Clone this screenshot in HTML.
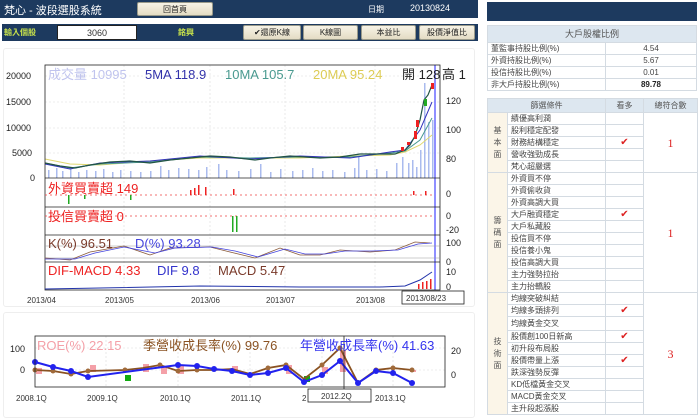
<!DOCTYPE html>
<html><head><meta charset="utf-8"><style>
*{margin:0;padding:0;box-sizing:border-box}
body{width:700px;height:420px;background:#fff;position:relative;overflow:hidden;font-family:"Liberation Sans","Noto Sans CJK TC",sans-serif;font-size:9px;color:#333}
.abs{position:absolute}
.nav{background:#1d3a5f}
.btn{position:absolute;background:linear-gradient(#f7f3e6,#e4dcc4);border:1px solid #9a9a8a;border-radius:2px;font-size:8px;color:#222;text-align:center;line-height:13px;height:15px}
table{border-collapse:collapse;font-size:8px;table-layout:fixed}
td{border:1px solid #d4dbe2;padding:0 3px;height:12px;line-height:10px;color:#444;white-space:nowrap;overflow:hidden}
.hd{background:#dde7f0;text-align:center;color:#555}
.cat{background:#fbf5e8;text-align:center;color:#555;line-height:12px;white-space:normal}
.ck{color:#d22;text-align:center;font-size:10px}
.num{color:#d22;text-align:center;font-size:12px;font-family:"Liberation Serif",serif}
</style></head><body>
<div class="abs nav" style="left:0;top:0;width:478px;height:18px"></div>
<div class="abs" style="left:4px;top:2px;color:#fff;font-size:11px">梵心 - 波段選股系統</div>
<div class="btn" style="left:137px;top:2px;width:76px;height:14px">回首頁</div>
<div class="abs" style="left:368px;top:4px;color:#fff;font-size:8px">日期</div>
<div class="abs" style="left:410px;top:3px;color:#fff;font-size:9px">20130824</div>
<div class="abs nav" style="left:487px;top:2px;width:210px;height:19px"></div>

<div class="abs nav" style="left:2px;top:24px;width:476px;height:17px"></div>
<div class="abs" style="left:4px;top:27px;color:#c6e04c;font-size:8px;font-weight:bold">輸入個股</div>
<div class="abs" style="left:57px;top:25px;width:80px;height:15px;background:#fff;border:1px solid #222;text-align:center;font-size:9px;line-height:15px">3060</div>
<div class="abs" style="left:178px;top:27px;color:#c6e04c;font-size:8px;font-weight:bold">銘興</div>
<div class="btn" style="left:243px;top:25px;width:58px">✔還原K線</div>
<div class="btn" style="left:303px;top:25px;width:55px">K線圖</div>
<div class="btn" style="left:361px;top:25px;width:55px">本益比</div>
<div class="btn" style="left:419px;top:25px;width:56px">股價淨值比</div>

<div class="abs" style="left:3px;top:48px;width:472px;height:259px;border:1px solid #eee;border-radius:3px"></div>
<div class="abs" style="left:3px;top:312px;width:472px;height:106px;border:1px solid #eee;border-radius:3px"></div>

<svg class="abs" style="left:0;top:0" width="480" height="420" font-family="Liberation Sans,Noto Sans CJK TC,sans-serif">
<g stroke="#ddd" stroke-dasharray="2,2" stroke-width="0.6">
<line x1="124" y1="65" x2="124" y2="290"/><line x1="210" y1="65" x2="210" y2="290"/><line x1="285" y1="65" x2="285" y2="290"/><line x1="375" y1="65" x2="375" y2="290"/>
<line x1="45" y1="76" x2="440" y2="76"/><line x1="45" y1="102" x2="440" y2="102"/><line x1="45" y1="128" x2="440" y2="128"/><line x1="45" y1="153" x2="440" y2="153"/>
</g>
<g fill="#aabbee">
<rect x="48" y="170" width="1.5" height="8"/><rect x="56" y="168" width="1.5" height="10"/><rect x="62" y="171" width="1.5" height="7"/><rect x="70" y="169" width="1.5" height="9"/><rect x="78" y="172" width="1.5" height="6"/><rect x="86" y="170" width="1.5" height="8"/><rect x="95" y="171" width="1.5" height="7"/><rect x="103" y="169" width="1.5" height="9"/><rect x="112" y="172" width="1.5" height="6"/><rect x="120" y="170" width="1.5" height="8"/><rect x="130" y="171" width="1.5" height="7"/><rect x="140" y="172" width="1.5" height="6"/><rect x="150" y="171" width="1.5" height="7"/><rect x="160" y="166" width="1.5" height="12"/><rect x="168" y="170" width="1.5" height="8"/><rect x="178" y="168" width="1.5" height="10"/><rect x="188" y="169" width="1.5" height="9"/><rect x="198" y="170" width="1.5" height="8"/><rect x="206" y="167" width="1.5" height="11"/><rect x="218" y="164" width="1.5" height="14"/><rect x="226" y="170" width="1.5" height="8"/><rect x="238" y="171" width="1.5" height="7"/><rect x="250" y="169" width="1.5" height="9"/><rect x="260" y="164" width="1.5" height="14"/><rect x="270" y="172" width="1.5" height="6"/><rect x="280" y="169" width="1.5" height="9"/><rect x="292" y="171" width="1.5" height="7"/><rect x="302" y="170" width="1.5" height="8"/><rect x="312" y="168" width="1.5" height="10"/><rect x="322" y="171" width="1.5" height="7"/><rect x="332" y="170" width="1.5" height="8"/><rect x="344" y="172" width="1.5" height="6"/><rect x="354" y="168" width="1.5" height="10"/><rect x="358" y="156" width="1.5" height="22"/><rect x="366" y="170" width="1.5" height="8"/><rect x="376" y="169" width="1.5" height="9"/><rect x="386" y="171" width="1.5" height="7"/><rect x="396" y="163" width="1.5" height="15"/><rect x="402" y="157" width="1.5" height="21"/><rect x="408" y="163" width="1.5" height="15"/><rect x="412" y="160" width="1.5" height="18"/><rect x="416" y="167" width="1.5" height="11"/><rect x="420" y="150" width="1.5" height="28"/><rect x="424" y="83" width="1.5" height="95"/><rect x="428" y="122" width="1.5" height="56"/><rect x="432" y="120" width="1.5" height="58"/>
</g>
<polyline fill="none" stroke="#e0d870" stroke-width="1" points="45,159 70,164 100,165 150,161 200,158 250,158 300,158 350,156 390,155 405,152 420,145 432,135"/>
<polyline fill="none" stroke="#4a9a90" stroke-width="1" points="45,163 70,168 100,164 150,162 200,157 250,158 300,157 350,157 390,153 405,151 420,140 432,118"/>
<polyline fill="none" stroke="#3333bb" stroke-width="1" points="45,164 70,169 100,163 150,161 200,156 250,159 300,156 350,158 390,152 405,150 420,130 432,102"/>
<polyline fill="none" stroke="#225544" stroke-width="1.2" points="45,163 60,166 75,168 90,165 110,162 130,161 150,163 170,160 190,158 210,156 230,157 255,160 270,158 290,156 320,158 340,157 360,154 380,154 395,154 405,150 410,145 415,136 420,120 424,100 428,95 432,85"/>
<g fill="#e22"><rect x="414" y="131" width="3" height="8"/><rect x="416" y="120" width="3" height="7"/><rect x="431" y="83" width="3" height="6"/><rect x="401" y="147" width="3" height="4"/><rect x="407" y="142" width="3" height="3"/></g>
<rect x="424" y="99" width="3" height="7" fill="#2a2"/>
<line x1="435" y1="65" x2="435" y2="290" stroke="#6a6aff" stroke-width="1.5"/>
<g fill="none" stroke="#222" stroke-width="0.8">
<rect x="45" y="65" width="395" height="225"/>
<line x1="45" y1="178" x2="440" y2="178"/><line x1="45" y1="207" x2="440" y2="207"/><line x1="45" y1="235" x2="440" y2="235"/><line x1="45" y1="262" x2="440" y2="262"/>
</g>
<g font-size="13">
<text x="48" y="79" fill="#c0c4ee">成交量 10995</text>
<text x="145" y="79" fill="#3333aa">5MA 118.9</text>
<text x="225" y="79" fill="#4a9a90">10MA 105.7</text>
<text x="313" y="79" fill="#ddcc55">20MA 95.24</text>
<text x="402" y="79" fill="#222">開 128</text>
<text x="442" y="79" fill="#222">高 1</text>
</g>
<g font-size="9" fill="#222">
<text x="6" y="79">20000</text><text x="6" y="105">15000</text><text x="6" y="131">10000</text><text x="12" y="156">5000</text><text x="30" y="181">0</text>
<text x="446" y="104">120</text><text x="446" y="133">100</text><text x="446" y="162">80</text>
<text x="446" y="197">0</text><text x="446" y="219">0</text><text x="446" y="233">-20</text>
<text x="446" y="246">100</text><text x="446" y="265">0</text><text x="446" y="275">10</text><text x="446" y="290">0</text>
</g>
<line x1="45" y1="195" x2="435" y2="195" stroke="#e44" stroke-dasharray="2,3" stroke-width="0.8"/>
<g fill="#e22"><rect x="190" y="190" width="1.5" height="5"/><rect x="194" y="188" width="1.5" height="7"/><rect x="198" y="185" width="1.5" height="10"/><rect x="205" y="187" width="1.5" height="8"/><rect x="233" y="189" width="1.5" height="6"/><rect x="413" y="191" width="1.5" height="4"/><rect x="425" y="191" width="1.5" height="4"/></g>
<g fill="#2a2"><rect x="68" y="195" width="1.5" height="9"/><rect x="130" y="195" width="1.5" height="5"/><rect x="84" y="195" width="1.5" height="4"/></g>
<text x="48" y="193" font-size="13" fill="#e22">外資買賣超 149</text>
<line x1="45" y1="216" x2="435" y2="216" stroke="#e44" stroke-dasharray="2,3" stroke-width="0.8"/>
<rect x="232" y="216" width="1.5" height="16" fill="#2a2"/><rect x="236" y="216" width="1.5" height="16" fill="#2a2"/>
<text x="48" y="221" font-size="13" fill="#e22">投信買賣超 0</text>
<line x1="45" y1="246" x2="440" y2="246" stroke="#999" stroke-width="0.6"/><line x1="45" y1="258" x2="440" y2="258" stroke="#999" stroke-width="0.6"/>
<polyline fill="none" stroke="#8a5a3a" stroke-width="0.8" points="45,258 70,260 90,252 124,246 150,255 170,248 210,247 230,252 255,258 280,248 300,255 320,255 340,250 370,252 395,250 415,242 430,243"/>
<polyline fill="none" stroke="#4444dd" stroke-width="0.8" points="45,259 75,259 95,253 124,247 155,253 175,248 212,247 235,251 258,257 285,249 305,254 325,254 345,251 372,251 398,250 418,244 432,243"/>
<text x="48" y="248" font-size="13" fill="#7a3a2a">K(%) 96.51</text><text x="135" y="248" font-size="13" fill="#4444dd">D(%) 93.28</text>
<polyline fill="none" stroke="#2233aa" stroke-width="1" points="45,289 100,288 200,286 300,287 380,287 405,286 420,280 432,272"/>
<g fill="#e22"><rect x="418" y="284" width="1.5" height="5"/><rect x="422" y="282" width="1.5" height="7"/><rect x="426" y="281" width="1.5" height="8"/><rect x="430" y="279" width="1.5" height="10"/></g>
<text x="48" y="275" font-size="13" fill="#e22">DIF-MACD 4.33</text><text x="157" y="275" font-size="13" fill="#3333cc">DIF 9.8</text><text x="218" y="275" font-size="13" fill="#7a3a2a">MACD 5.47</text>
<g font-size="8" fill="#333"><text x="27" y="303">2013/04</text><text x="105" y="303">2013/05</text><text x="191" y="303">2013/06</text><text x="266" y="303">2013/07</text><text x="356" y="303">2013/08</text></g>
<rect x="402" y="291" width="62" height="13" fill="#fff" stroke="#222" stroke-width="0.8"/><text x="406" y="301" font-size="8" fill="#333">2013/08/23</text>

<g stroke="#ddd" stroke-dasharray="2,2" stroke-width="0.6"><line x1="106" y1="336" x2="106" y2="387"/><line x1="178" y1="336" x2="178" y2="387"/><line x1="250" y1="336" x2="250" y2="387"/><line x1="322" y1="336" x2="322" y2="387"/><line x1="393" y1="336" x2="393" y2="387"/><line x1="35" y1="370" x2="445" y2="370"/><line x1="35" y1="348" x2="445" y2="348"/></g>
<g fill="#f4a0a8"><rect x="36" y="368" width="6" height="6"/><rect x="90" y="365" width="6" height="7"/><rect x="143" y="364" width="6" height="8"/><rect x="161" y="367" width="6" height="7"/><rect x="178" y="366" width="6" height="8"/><rect x="232" y="366" width="6" height="7"/><rect x="286" y="365" width="6" height="9"/><rect x="322" y="367" width="6" height="7"/><rect x="340" y="350" width="6" height="22"/><rect x="410" y="370" width="6" height="2"/></g>
<g fill="#1a1"><rect x="125" y="375" width="6" height="6"/><rect x="304" y="376" width="6" height="6"/></g>
<polyline fill="none" stroke="#8a5222" stroke-width="1.8" points="35,370 53,371 71,374 88,371 125,370 143,368 160,365 178,371 197,370 214,370 232,369 250,374 268,368 286,365 304,379 322,365 340,348 358,383 376,370 393,368 412,370"/>
<g fill="#a06a3a"><circle cx="35" cy="370" r="2.5"/><circle cx="53" cy="371" r="2.5"/><circle cx="71" cy="374" r="2.5"/><circle cx="88" cy="371" r="2.5"/><circle cx="125" cy="370" r="2.5"/><circle cx="160" cy="365" r="2.5"/><circle cx="178" cy="371" r="2.5"/><circle cx="197" cy="370" r="2.5"/><circle cx="268" cy="368" r="2.5"/><circle cx="286" cy="365" r="2.5"/><circle cx="322" cy="365" r="2.5"/><circle cx="340" cy="348" r="2.5"/><circle cx="376" cy="370" r="2.5"/><circle cx="393" cy="368" r="2.5"/><circle cx="412" cy="370" r="2.5"/></g>
<polyline fill="none" stroke="#2222ee" stroke-width="2" points="35,362 53,367 71,371 88,377 178,365 197,366 214,369 232,371 250,375 268,373 286,368 304,382 322,375 340,361 358,383 376,371 393,373 412,383"/>
<g fill="#2222ee"><circle cx="35" cy="362" r="3"/><circle cx="53" cy="367" r="3"/><circle cx="71" cy="371" r="3"/><circle cx="88" cy="377" r="3"/><circle cx="178" cy="365" r="3"/><circle cx="197" cy="366" r="3"/><circle cx="214" cy="369" r="3"/><circle cx="232" cy="371" r="3"/><circle cx="250" cy="375" r="3"/><circle cx="268" cy="373" r="3"/><circle cx="286" cy="368" r="3"/><circle cx="304" cy="382" r="3"/><circle cx="322" cy="375" r="3"/><circle cx="340" cy="361" r="3"/><circle cx="358" cy="383" r="3"/><circle cx="376" cy="371" r="3"/><circle cx="393" cy="373" r="3"/><circle cx="412" cy="383" r="3"/></g>
<line x1="344" y1="336" x2="344" y2="392" stroke="#222" stroke-width="0.8"/>
<rect x="35" y="336" width="410" height="51" fill="none" stroke="#222" stroke-width="0.8"/>
<text x="37" y="350" font-size="13" fill="#f4a0a8">ROE(%) 22.15</text>
<text x="143" y="350" font-size="13" fill="#8a5222">季營收成長率(%) 99.76</text>
<text x="300" y="350" font-size="13" fill="#3333ee">年營收成長率(%) 41.63</text>
<g font-size="9" fill="#222"><text x="10" y="352">100</text><text x="20" y="373">0</text><text x="451" y="354">20</text><text x="451" y="378">0</text></g>
<g font-size="8" fill="#333"><text x="16" y="401">2008.1Q</text><text x="87" y="401">2009.1Q</text><text x="160" y="401">2010.1Q</text><text x="231" y="401">2011.1Q</text><text x="302" y="401">2</text><text x="375" y="401">2013.1Q</text></g>
<rect x="308" y="389" width="63" height="13" fill="#fff" stroke="#222" stroke-width="0.8"/><text x="321" y="399" font-size="8" fill="#333">2012.2Q</text>
</svg>

<table class="abs" style="left:487px;top:25px;width:210px">
<colgroup><col style="width:118px"><col></colgroup>
<tr><td colspan="2" class="hd" style="height:17px;font-size:9px">大戶股權比例</td></tr>
<tr><td>董監事持股比例(%)</td><td style="text-align:center">4.54</td></tr>
<tr><td>外資持股比例(%)</td><td style="text-align:center">5.67</td></tr>
<tr><td>投信持股比例(%)</td><td style="text-align:center">0.01</td></tr>
<tr><td>非大戶持股比例(%)</td><td style="text-align:center;color:#222;font-weight:bold">89.78</td></tr>
</table>

<table class="abs" style="left:487px;top:98px;width:210px">
<colgroup><col style="width:20px"><col style="width:98px"><col style="width:38px"><col style="width:54px"></colgroup>
<tr><td colspan="2" class="hd" style="height:14px">篩選條件</td><td class="hd">看多</td><td class="hd">總符合數</td></tr>
<tr><td rowspan="5" class="cat">基<br>本<br>面</td><td>績優高利潤</td><td></td><td rowspan="5" class="num">1</td></tr>
<tr><td>股利穩定配發</td><td></td></tr>
<tr><td>財務結構穩定</td><td class="ck">✔</td></tr>
<tr><td>營收強勁成長</td><td></td></tr>
<tr><td>梵心超嚴選</td><td></td></tr>
<tr><td rowspan="10" class="cat">籌<br>碼<br>面</td><td>外資買不停</td><td></td><td rowspan="10" class="num">1</td></tr>
<tr><td>外資偷收貨</td><td></td></tr>
<tr><td>外資高調大買</td><td></td></tr>
<tr><td>大戶融資穩定</td><td class="ck">✔</td></tr>
<tr><td>大戶私藏股</td><td></td></tr>
<tr><td>投信買不停</td><td></td></tr>
<tr><td>投信養小鬼</td><td></td></tr>
<tr><td>投信高調大買</td><td></td></tr>
<tr><td>主力強勢拉抬</td><td></td></tr>
<tr><td>主力抬轎股</td><td></td></tr>
<tr><td rowspan="10" class="cat">技<br>術<br>面</td><td>均線突破糾結</td><td></td><td rowspan="10" class="num">3</td></tr>
<tr><td>均線多頭排列</td><td class="ck">✔</td></tr>
<tr><td style="height:14px">均線黃金交叉</td><td></td></tr>
<tr><td>股價創100日新高</td><td class="ck">✔</td></tr>
<tr><td>初升段布局股</td><td></td></tr>
<tr><td>股價帶量上漲</td><td class="ck">✔</td></tr>
<tr><td>跌深強勢反彈</td><td></td></tr>
<tr><td>KD低檔黃金交叉</td><td></td></tr>
<tr><td>MACD黃金交叉</td><td></td></tr>
<tr><td>主升段起漲股</td><td></td></tr>
</table>
</body></html>
